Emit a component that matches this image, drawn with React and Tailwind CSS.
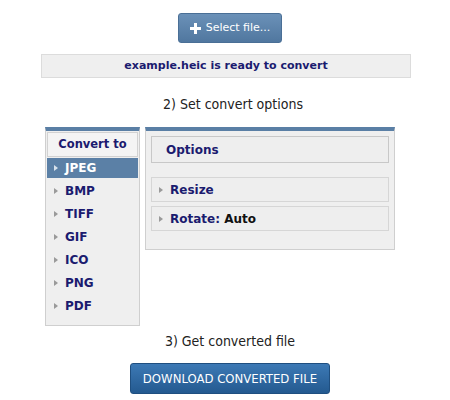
import React from 'react';

const formats = ['JPEG', 'BMP', 'TIFF', 'GIF', 'ICO', 'PNG', 'PDF'];

const Arrow = ({ light }) => (
  <svg width="6" height="8" viewBox="0 0 6 8" className="shrink-0">
    <path d="M1 1 L5 4 L1 7 Z" fill={light ? '#d8e2ec' : '#9a9a9a'} />
  </svg>
);

const App = () => {
  return (
    <div className="w-[450px] h-[400px] bg-white overflow-hidden font-['DejaVu_Sans','Liberation_Sans',sans-serif] text-[#222]">
      {/* Select file */}
      <div className="flex justify-center pt-[13px] pl-[10px]">
        <button className="flex items-center gap-[5px] h-[30px] w-[104px] justify-center rounded-[3px] border border-[#4a6f96] bg-gradient-to-b from-[#6b91b8] to-[#50779f] text-white text-[11px]">
          <svg width="11" height="11" viewBox="0 0 11 11" className="shrink-0">
            <rect x="4" y="0" width="3" height="11" fill="#fff" />
            <rect x="0" y="4" width="11" height="3" fill="#fff" />
          </svg>
          <span>Select file...</span>
        </button>
      </div>

      {/* Status bar */}
      <div className="ml-[41px] w-[370px] mt-[11px] h-[24px] flex items-center justify-center bg-[#efefef] border border-[#dcdcdc] text-[11px] font-bold text-[#1b1b6f]">
        example.heic is ready to convert
      </div>

      <div className="text-center text-[14px] mt-[16px] pl-[16px] font-['DejaVu_Sans_Condensed','DejaVu_Sans',sans-serif]">2) Set convert options</div>

      {/* Panels */}
      <div className="flex items-start gap-[5px] ml-[45px] mt-[12px]">
        <div className="w-[95px] h-[199px] bg-[#efefef] border border-[#cfcfcf] border-t-[4px] border-t-[#5a7fa5] pt-[1px] px-[1px]">
          <div className="h-[25px] flex items-center justify-center bg-[#f4f4f4] border border-[#d2d2d2] text-[11.5px] font-bold text-[#1b1b6f]">
            Convert to
          </div>
          <div className="mt-[1px] flex flex-col">
            {formats.map((f, i) => (
              <div
                key={f}
                className={
                  i === 0
                    ? 'h-[20px] mb-[3px] flex items-center gap-[6px] pl-[6px] bg-[#5b80a6] text-white text-[12px] font-bold'
                    : 'h-[20px] mb-[3px] flex items-center gap-[6px] pl-[6px] text-[#1b1b6f] text-[12px] font-bold'
                }
              >
                <Arrow light={i === 0} />
                <span>{f}</span>
              </div>
            ))}
          </div>
        </div>

        <div className="w-[250px] h-[123px] bg-[#efefef] border border-[#cfcfcf] border-t-[4px] border-t-[#5a7fa5] px-[5px] pt-[5px]">
          <div className="h-[27px] flex items-center pl-[14px] bg-[#eeeeee] border border-[#c8c8c8] text-[12px] font-bold text-[#1b1b6f]">
            Options
          </div>
          <div className="mt-[14px] h-[25px] flex items-center gap-[6px] pl-[6px] bg-[#eeeeee] border border-[#d6d6d6] text-[12px] font-bold text-[#1b1b6f]">
            <Arrow />
            <span>Resize</span>
          </div>
          <div className="mt-[4px] h-[25px] flex items-center gap-[6px] pl-[6px] bg-[#eeeeee] border border-[#d6d6d6] text-[12px] font-bold text-[#1b1b6f]">
            <Arrow />
            <span>
              Rotate: <span className="text-[#111]">Auto</span>
            </span>
          </div>
        </div>
      </div>

      <div className="text-center text-[14px] mt-[5px] pl-[10px] font-['DejaVu_Sans_Condensed','DejaVu_Sans',sans-serif]">3) Get converted file</div>

      <div className="flex justify-center mt-[11px] pl-[10px]">
        <button className="h-[31px] w-[200px] rounded-[3px] border border-[#1f4f80] bg-gradient-to-b from-[#3c79b5] to-[#245a90] text-white text-[13px] font-['DejaVu_Sans_Condensed','DejaVu_Sans',sans-serif]">
          DOWNLOAD CONVERTED FILE
        </button>
      </div>
    </div>
  );
};

export default App;
